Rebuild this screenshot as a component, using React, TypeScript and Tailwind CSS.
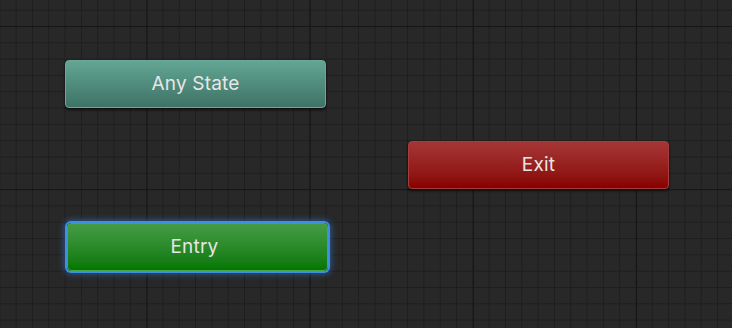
import React from 'react'

type Node = {
  label: string
  cls: string
}

// Nodes on the animator graph canvas (free canvas, placed by coordinates)
const nodes: Node[] = [
  {
    label: 'Any State',
    cls: 'left-[65px] top-[60px] bg-gradient-to-b from-[#63a693] to-[#3e7366] border-[#6aa998] shadow-[0_2px_3px_rgba(0,0,0,0.6)]',
  },
  {
    label: 'Exit',
    cls: 'left-[408px] top-[141px] bg-gradient-to-b from-[#a53535] to-[#880000] border-[#a83c3c] shadow-[0_2px_3px_rgba(0,0,0,0.6)]',
  },
  {
    label: 'Entry',
    cls: 'left-[67px] top-[223px] pr-[6px] bg-gradient-to-b from-[#449c44] to-[#007700] border-[#4aa84a] ring-2 ring-[#3d8fe2] shadow-[0_0_6px_3px_rgba(50,130,230,0.55)]',
  },
]

export default function App() {
  return (
    <div className="relative w-[732px] h-[328px] overflow-hidden bg-[#282828] font-['Inter','Noto_Sans',sans-serif] [background-image:linear-gradient(to_right,#161616_1px,transparent_1px),linear-gradient(to_bottom,#161616_1px,transparent_1px),linear-gradient(to_right,#1e1e1e_1px,transparent_1px),linear-gradient(to_bottom,#1e1e1e_1px,transparent_1px)] [background-size:163.2px_163.2px,163.2px_163.2px,16.32px_16.32px,16.32px_16.32px] [background-position:146.5px_26px,146.5px_26px,-0.7px_9.7px,-0.7px_9.7px]">
      {nodes.map((n) => (
        <div
          key={n.label}
          className={`absolute w-[261px] h-[48px] rounded-[4px] border flex items-center justify-center text-[19px] font-normal tracking-[0.2px] text-[#e6e6e6] ${n.cls}`}
        >
          {n.label}
        </div>
      ))}
    </div>
  )
}
